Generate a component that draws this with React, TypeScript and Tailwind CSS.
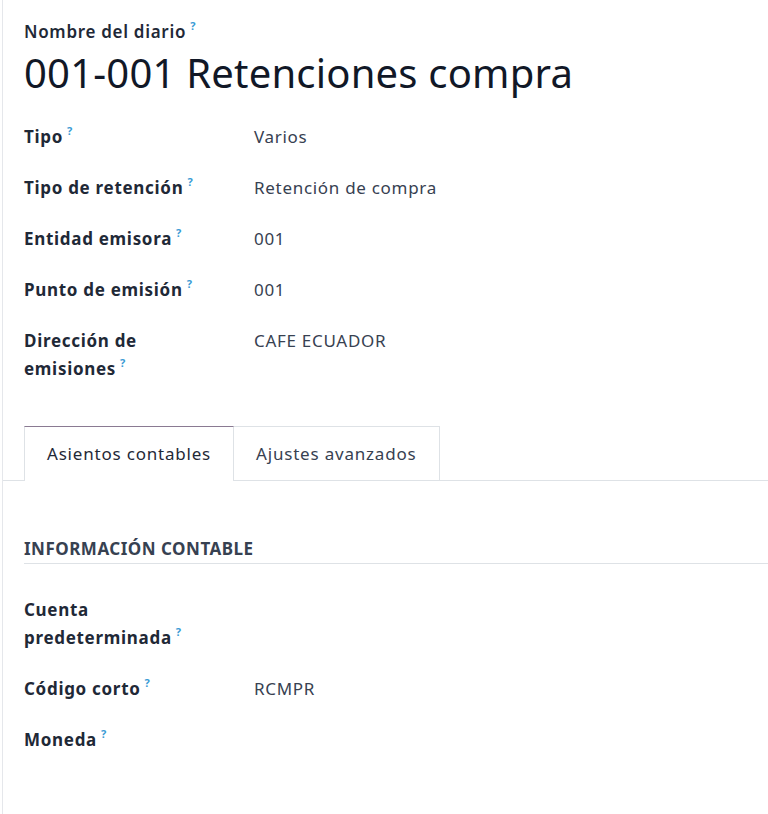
import type { ReactNode } from 'react';

const font = { fontFamily: '"Noto Sans", "Open Sans", sans-serif' };

function Help() {
  return (
    <sup className="relative -top-[0.75em] ml-1 text-[11px] font-bold leading-none tracking-normal text-[#3a9bd5]">
      ?
    </sup>
  );
}

function Field({ label, value }: { label: ReactNode; value?: string }) {
  return (
    <div className="flex items-start pb-[23px] text-[17px] leading-[28px] tracking-[0.7px]">
      <div className="mr-[40px] w-[190px] shrink-0 font-bold text-[#1f2937]">
        {label}
        <Help />
      </div>
      <div className="text-[#374151]">{value}</div>
    </div>
  );
}

export default function App() {
  return (
    <div className="min-h-[814px] w-[768px] bg-white" style={font}>
      <div className="ml-[2px] min-h-[814px] border-l border-[#e5e7eb]">
        <div className="pl-[21px] pt-[20px]">
          <div className="text-[17px] font-semibold leading-[24px] tracking-[0.7px] text-[#1f2937]">
            Nombre del diario
            <Help />
          </div>
          <h1 className="mt-[6px] text-[40px] leading-[46px] tracking-[0.2px] text-[#111827]">
            001-001 Retenciones compra
          </h1>

          <div className="mt-[27px]">
            <Field label="Tipo" value="Varios" />
            <Field label="Tipo de retención" value="Retención de compra" />
            <Field label="Entidad emisora" value="001" />
            <Field label="Punto de emisión" value="001" />
            <Field label="Dirección de emisiones" value="CAFE ECUADOR" />
          </div>
        </div>

        <div className="mt-[20px] flex border-b border-[#dee2e6] pl-[21px] text-[17px] tracking-[0.8px]">
          <div className="-mb-px flex h-[55px] items-center border-x border-t border-[#dee2e6] border-t-[#8a7a92] bg-white px-[22px] text-[#1f2937]">
            Asientos contables
          </div>
          <div className="flex h-[54px] items-center border-r border-t border-[#dee2e6] px-[22px] text-[#374151]">
            Ajustes avanzados
          </div>
        </div>

        <div className="pl-[21px] pt-[56px]">
          <div className="border-b border-[#dee2e6] pb-[2px] text-[17px] font-bold uppercase leading-[24px] tracking-[0.5px] text-[#374151]">
            Información contable
          </div>
          <div className="mt-[32px]">
            <Field label="Cuenta predeterminada" />
            <Field label="Código corto" value="RCMPR" />
            <Field label="Moneda" />
          </div>
        </div>
      </div>
    </div>
  );
}
